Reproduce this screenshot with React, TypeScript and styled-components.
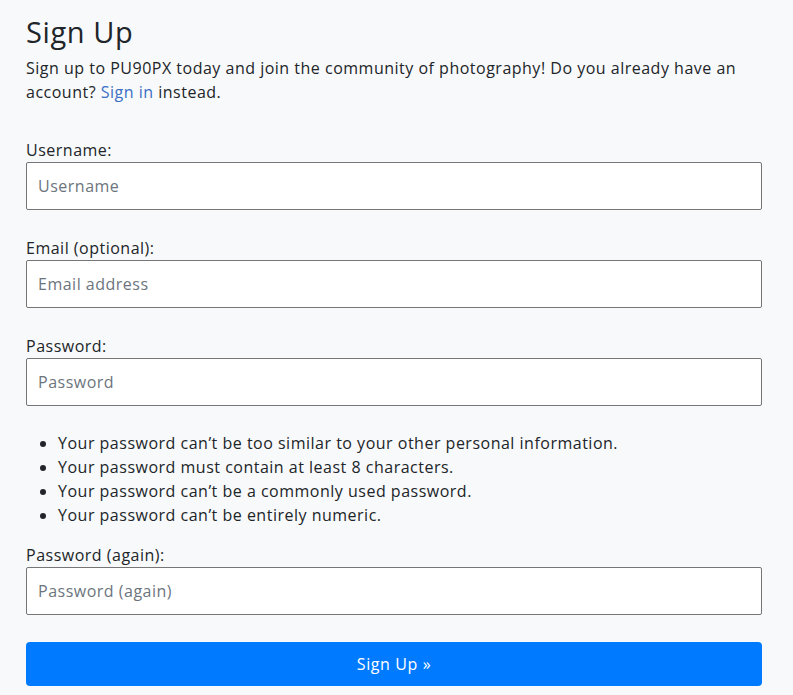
import React from "react";
import styled, { createGlobalStyle } from "styled-components";

const Global = createGlobalStyle`
  html, body { margin: 0; padding: 0; background: #f8f9fa; }
  body { font-family: "Open Sans", "Noto Sans", sans-serif; color: #212529; letter-spacing: 0.5px; }
  * { box-sizing: border-box; }
`;

const Page = styled.main`
  width: 736px;
  margin-left: 26px;
  padding-top: 14px;
  padding-bottom: 9px;
`;

const Title = styled.h1`
  margin: 0 0 6px;
  font-size: 29px;
  font-weight: 500;
  line-height: 36px;
  letter-spacing: 0.6px;
`;

const Intro = styled.p`
  margin: 0 0 34px;
  font-size: 16px;
  line-height: 24px;
`;

const Link = styled.a`
  color: #3b6fc6;
  text-decoration: none;
`;

const Form = styled.form`
  display: flex;
  flex-direction: column;
`;

const Field = styled.div<{ $gap?: number }>`
  display: flex;
  flex-direction: column;
  margin-bottom: ${(p) => p.$gap ?? 26}px;
`;

const Label = styled.label`
  font-size: 16px;
  line-height: 24px;
  margin-bottom: 0;
`;

const Input = styled.input`
  height: 48px;
  width: 100%;
  border: 1px solid #767676;
  border-radius: 2px;
  background: #fff;
  padding: 0 11px;
  font-family: inherit;
  letter-spacing: inherit;
  font-size: 16px;
  color: #212529;
  &::placeholder { color: #6c757d; }
`;

const Rules = styled.ul`
  margin: 0 0 16px;
  padding-left: 32px;
  font-size: 16px;
  line-height: 24px;
`;

const Button = styled.button`
  height: 44px;
  width: 100%;
  border: none;
  border-radius: 4px;
  background: #007bff;
  color: #fff;
  font-family: inherit;
  letter-spacing: 0.6px;
  font-size: 16px;
`;

export default function App() {
  return (
    <>
      <Global />
      <Page>
        <Title>Sign Up</Title>
        <Intro>
          Sign up to PU90PX today and join the community of photography! Do you already have an
          account? <Link href="#">Sign in</Link> instead.
        </Intro>
        <Form>
          <Field>
            <Label>Username:</Label>
            <Input placeholder="Username" />
          </Field>
          <Field>
            <Label>Email (optional):</Label>
            <Input placeholder="Email address" />
          </Field>
          <Field $gap={25}>
            <Label>Password:</Label>
            <Input type="password" placeholder="Password" />
          </Field>
          <Rules>
            <li>Your password can’t be too similar to your other personal information.</li>
            <li>Your password must contain at least 8 characters.</li>
            <li>Your password can’t be a commonly used password.</li>
            <li>Your password can’t be entirely numeric.</li>
          </Rules>
          <Field $gap={27}>
            <Label>Password (again):</Label>
            <Input type="password" placeholder="Password (again)" />
          </Field>
          <Button type="button">Sign Up »</Button>
        </Form>
      </Page>
    </>
  );
}
